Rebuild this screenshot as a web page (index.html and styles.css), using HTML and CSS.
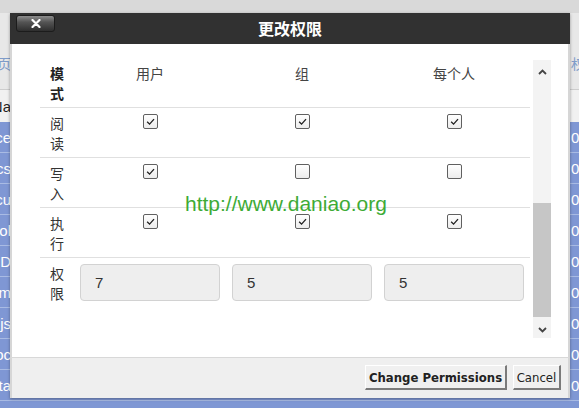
FILE: index.html
```html
<!DOCTYPE html>
<html lang="zh-CN">
<head>
<meta charset="utf-8">
<title>更改权限</title>
<link rel="stylesheet" href="styles.css">
</head>
<body>
<div class="bg">
  <div class="bg-top"></div>
  <div class="bg-toolbar">
    <span class="edge-l link">首页</span>
    <span class="edge-r link">权限</span>
  </div>
  <div class="bg-head">
    <span class="edge-l">Na</span>
  </div>
  <div class="bg-row"><span class="edge-l">Space</span><span class="edge-r">0644</span></div>
  <div class="bg-row"><span class="edge-l">docs</span><span class="edge-r">0644</span></div>
  <div class="bg-row"><span class="edge-l">docu</span><span class="edge-r">0644</span></div>
  <div class="bg-row"><span class="edge-l">tool</span><span class="edge-r">0755</span></div>
  <div class="bg-row"><span class="edge-l">D</span><span class="edge-r">0755</span></div>
  <div class="bg-row"><span class="edge-l">im</span><span class="edge-r">0755</span></div>
  <div class="bg-row"><span class="edge-l">js</span><span class="edge-r">0644</span></div>
  <div class="bg-row"><span class="edge-l">doc</span><span class="edge-r">0644</span></div>
  <div class="bg-row"><span class="edge-l">data</span><span class="edge-r">0644</span></div>
</div>

<div class="dialog">
  <div class="titlebar">
    <button class="close" type="button" aria-label="关闭">
      <svg width="10" height="9" viewBox="0 0 10 9"><path d="M1.5 1 L8.5 8 M8.5 1 L1.5 8" stroke="#fff" stroke-width="2.2" stroke-linecap="round"/></svg>
    </button>
    <div class="title">更改权限</div>
    <div></div>
  </div>

  <div class="dbody">
    <div class="perm">
      <div class="prow">
        <div class="lbl bold">模式</div>
        <div class="cell">用户</div>
        <div class="cell">组</div>
        <div class="cell">每个人</div>
      </div>
      <div class="prow">
        <div class="lbl">阅读</div>
        <div class="cell"><span class="cb"><svg viewBox="0 0 14 14"><path d="M3.4 7.2 L6 9.8 L10.8 4.4" /></svg></span></div>
        <div class="cell"><span class="cb"><svg viewBox="0 0 14 14"><path d="M3.4 7.2 L6 9.8 L10.8 4.4" /></svg></span></div>
        <div class="cell"><span class="cb"><svg viewBox="0 0 14 14"><path d="M3.4 7.2 L6 9.8 L10.8 4.4" /></svg></span></div>
      </div>
      <div class="prow">
        <div class="lbl">写入</div>
        <div class="cell"><span class="cb"><svg viewBox="0 0 14 14"><path d="M3.4 7.2 L6 9.8 L10.8 4.4" /></svg></span></div>
        <div class="cell"><span class="cb"></span></div>
        <div class="cell"><span class="cb"></span></div>
      </div>
      <div class="prow">
        <div class="lbl">执行</div>
        <div class="cell"><span class="cb"><svg viewBox="0 0 14 14"><path d="M3.4 7.2 L6 9.8 L10.8 4.4" /></svg></span></div>
        <div class="cell"><span class="cb"><svg viewBox="0 0 14 14"><path d="M3.4 7.2 L6 9.8 L10.8 4.4" /></svg></span></div>
        <div class="cell"><span class="cb"><svg viewBox="0 0 14 14"><path d="M3.4 7.2 L6 9.8 L10.8 4.4" /></svg></span></div>
      </div>
      <div class="prow last">
        <div class="lbl">权限</div>
        <div class="cell"><div class="num">7</div></div>
        <div class="cell"><div class="num">5</div></div>
        <div class="cell"><div class="num">5</div></div>
      </div>
    </div>

    <div class="sbar">
      <div class="sarrow up"><svg width="9" height="6" viewBox="0 0 9 6"><path d="M1 5 L4.5 1.5 L8 5" fill="none" stroke="#444" stroke-width="1.8"/></svg></div>
      <div class="strack"><div class="sthumb"></div></div>
      <div class="sarrow down"><svg width="9" height="6" viewBox="0 0 9 6"><path d="M1 1 L4.5 4.5 L8 1" fill="none" stroke="#444" stroke-width="1.8"/></svg></div>
    </div>
  </div>

  <div class="dfoot">
    <button class="btn strong" type="button">Change Permissions</button>
    <button class="btn" type="button">Cancel</button>
  </div>
</div>

<div class="watermark">http://www.daniao.org</div>
</body>
</html>
```

FILE: styles.css
```css
* { box-sizing: border-box; margin: 0; padding: 0; }

html, body {
  width: 579px;
  height: 408px;
  overflow: hidden;
}

body {
  position: relative;
  background: #7f97d4;
  font-family: "Noto Sans CJK SC", "Liberation Sans", sans-serif;
  font-size: 14px;
  color: #333;
}

/* ---------- page behind the modal ---------- */
.bg {
  width: 579px;
  height: 408px;
  overflow: hidden;
}

.bg-top { height: 13px; background: #d9d9d9; }

.bg-toolbar {
  height: 77px;
  background: #e8e8e8;
  border-bottom: 1px solid #cdcdcd;
  display: flex;
  justify-content: space-between;
  align-items: flex-start;
  padding-top: 40px;
  line-height: 20px;
}

.bg-head {
  height: 32px;
  background: #f1f1f1;
  display: flex;
  align-items: center;
  font-family: "Liberation Sans", sans-serif;
  font-size: 15px;
  color: #222;
}

.bg-row {
  height: 31px;
  border-bottom: 1px solid #a9bbe4;
  display: flex;
  justify-content: space-between;
  align-items: center;
  font-family: "Liberation Sans", sans-serif;
  font-size: 15px;
  color: #fff;
}

.edge-l {
  width: 11px;
  display: flex;
  justify-content: flex-end;
  white-space: nowrap;
}

.edge-r {
  width: 8px;
  white-space: nowrap;
}

.link { color: #7f9cc9; }

/* ---------- modal ---------- */
.dialog {
  position: absolute;
  left: 10px;
  top: 13px;
  width: 560px;
  box-shadow: 0 1px 3px rgba(0, 0, 0, 0.35);
}

.titlebar {
  height: 31px;
  background: #313131;
  display: grid;
  grid-template-columns: 1fr auto 1fr;
  padding: 0 6px;
}

.close {
  justify-self: start;
  margin-top: 2px;
  width: 39px;
  height: 17px;
  border: 1px solid #1c1c1c;
  border-radius: 3px;
  background: linear-gradient(#8d8d8d 0%, #555 40%, #2e2e2e 100%);
  display: flex;
  align-items: center;
  justify-content: center;
}

.close svg { display: block; }

.title {
  color: #fff;
  font-weight: bold;
  font-size: 16px;
  line-height: 31px;
}

.dbody {
  height: 313px;
  background: #fff;
  border-left: 2px solid #d6d6d6;
  border-right: 2px solid #d6d6d6;
  display: flex;
  align-items: flex-start;
  gap: 3px;
  padding: 14px 17px 19px 28px;
}

.perm { width: 490px; }

.prow {
  display: grid;
  grid-template-columns: 34px repeat(3, 152px);
  padding: 5px 0 4px;
  border-bottom: 1px solid #e0e0e0;
  line-height: 20px;
}

.prow.last { border-bottom: none; }

.lbl {
  padding-left: 10px;
  padding-right: 10px;
  color: #333;
}

.bold { font-weight: bold; color: #222; }

.cell {
  display: flex;
  justify-content: center;
  align-items: flex-start;
  color: #444;
}

.cb {
  flex: none;
  width: 15px;
  height: 15px;
  margin-top: 1px;
  border: 1px solid #606060;
  border-radius: 2px;
  background: linear-gradient(#fff, #ececec);
}

.cb svg {
  display: block;
  width: 13px;
  height: 13px;
  fill: none;
  stroke: #1e1e1e;
  stroke-width: 1.4;
}

.num {
  width: 140px;
  height: 37px;
  margin-top: 1px;
  border: 1px solid #d2d2d2;
  border-radius: 4px;
  background: #eeeeee;
  padding-left: 14px;
  font-family: "Liberation Sans", sans-serif;
  font-size: 15px;
  line-height: 35px;
  color: #333;
}

/* scrollbar */
.sbar {
  width: 18px;
  height: 278px;
  margin-top: 2px;
  background: #f3f3f3;
  display: flex;
  flex-direction: column;
}

.sarrow {
  display: flex;
  justify-content: center;
  align-items: center;
}

.sarrow.up { height: 24px; }
.sarrow.down { height: 16px; }

.strack { flex: 1; }

.sthumb {
  margin-top: 119px;
  height: 114px;
  background: #c6c6c6;
}

/* footer */
.dfoot {
  background: #efefef;
  border-top: 1px solid #d8d8d8;
  border-left: 2px solid #d6d6d6;
  border-right: 2px solid #d6d6d6;
  display: flex;
  justify-content: flex-end;
  gap: 6px;
  padding: 7px 7px 8px;
}

.btn {
  height: 25px;
  padding: 0;
  white-space: nowrap;
  background: #f0f0f0;
  border-top: 1px solid #fff;
  border-left: 1px solid #fff;
  border-right: 2px solid #7a7a7a;
  border-bottom: 2px solid #7a7a7a;
  font-family: "DejaVu Sans Condensed", "DejaVu Sans", sans-serif;
  font-stretch: condensed;
  font-size: 13px;
  color: #222;
}

.btn.strong {
  width: 142px;
  font-weight: bold;
}

.btn:not(.strong) { width: 48px; }

/* watermark overlay */
.watermark {
  position: absolute;
  left: 185px;
  top: 193px;
  font-family: "Liberation Sans", sans-serif;
  font-size: 21px;
  line-height: 1;
  color: #3eab36;
  white-space: nowrap;
}
```
